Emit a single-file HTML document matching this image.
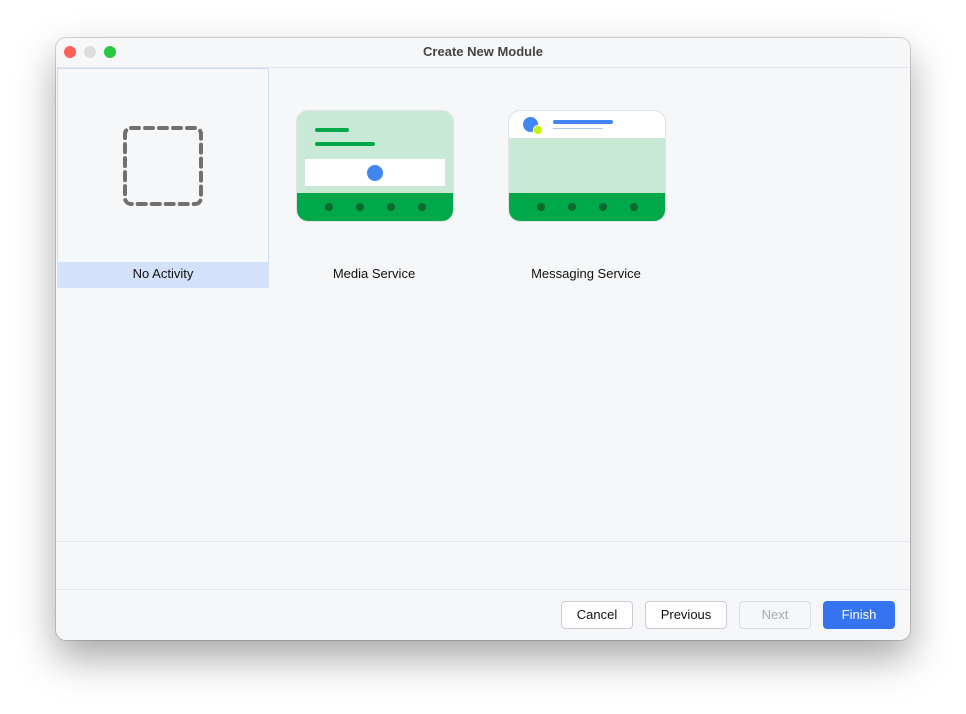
<!DOCTYPE html>
<html><head><style>
body{margin:0;width:966px;height:714px;background:#fff;font-family:"Liberation Sans",sans-serif;position:relative;overflow:hidden}
.win{position:absolute;left:56px;top:38px;width:854px;height:602px;background:#f6f7f9;border-radius:10px;box-shadow:0 18px 40px rgba(0,0,0,.35),0 0 0 1px rgba(0,0,0,.15);overflow:hidden}
.dot{position:absolute;top:8px;width:12px;height:12px;border-radius:50%}
.title{position:absolute;top:0;left:0;right:0;height:29px;line-height:27px;text-align:center;font-size:13px;font-weight:bold;color:#444}
.content{position:absolute;left:0;top:29px;width:854px;height:473px;border-top:1px solid #e4e6ea;border-bottom:1px solid #e4e6ea}
.sel{position:absolute;left:1px;top:0px;width:210px;height:218px;border:1px solid #cfdcf5}
.lbl{position:absolute;font-size:13px;color:#111;text-align:center;width:212px;height:26px;line-height:24px}
.btn{position:absolute;top:563px;height:28px;box-sizing:border-box;border:1px solid #c9ccd2;border-radius:4px;background:#fff;font-size:13px;text-align:center;line-height:26px;color:#111}
.card{position:absolute;width:156px;height:110px;border:1px solid #dfe2e6;border-radius:12px;overflow:hidden;background:#c8e9d6}
.bar{position:absolute;left:0;right:0;bottom:0;height:28px;background:#00a84a}
.bd{position:absolute;top:10px;width:8px;height:8px;border-radius:50%;background:#0d6a2e}
</style></head><body>
<div class="win">
<div class="dot" style="left:8px;background:#fe5f57"></div>
<div class="dot" style="left:28px;background:#dcdcdc"></div>
<div class="dot" style="left:48px;background:#28c840"></div>
<div class="title">Create New Module</div>
<div class="content">
 <div class="sel"></div>
 <svg style="position:absolute;left:65px;top:56px" width="84" height="84" viewBox="0 0 84 84"><rect x="4" y="4" width="76" height="76" rx="6" fill="none" stroke="#707070" stroke-width="4" stroke-linecap="round" stroke-dasharray="8 6"/></svg>
 <div class="lbl" style="left:1px;top:194px;background:#d3e1fb">No Activity</div>
 <div class="card" style="left:240px;top:42px">
  <div style="position:absolute;left:18px;top:17px;width:34px;height:4px;border-radius:2px;background:#00a84a"></div>
  <div style="position:absolute;left:18px;top:31px;width:60px;height:4px;border-radius:2px;background:#00a84a"></div>
  <div style="position:absolute;left:8px;top:48px;width:140px;height:27px;background:#fff"></div>
  <div style="position:absolute;left:70px;top:54px;width:16px;height:16px;border-radius:50%;background:#4286f4"></div>
  <div class="bar"><div class="bd" style="left:28px"></div><div class="bd" style="left:59px"></div><div class="bd" style="left:90px"></div><div class="bd" style="left:121px"></div></div>
 </div>
 <div class="lbl" style="left:212px;top:194px">Media Service</div>
 <div class="card" style="left:452px;top:42px">
  <div style="position:absolute;left:0;right:0;top:0;height:27px;background:#fff"></div>
  <div style="position:absolute;left:14px;top:6px;width:15px;height:15px;border-radius:50%;background:#4286f4"></div>
  <div style="position:absolute;left:24px;top:14px;width:8px;height:8px;border-radius:50%;background:#c6f400;border:1px solid #fff"></div>
  <div style="position:absolute;left:44px;top:9px;width:60px;height:4px;border-radius:2px;background:#4286f4"></div>
  <div style="position:absolute;left:44px;top:17px;width:50px;height:1px;background:#a9c7f7"></div>
  <div class="bar"><div class="bd" style="left:28px"></div><div class="bd" style="left:59px"></div><div class="bd" style="left:90px"></div><div class="bd" style="left:121px"></div></div>
 </div>
 <div class="lbl" style="left:424px;top:194px">Messaging Service</div>
</div>
<div style="position:absolute;left:0;right:0;top:551px;height:1px;background:#e4e6ea"></div>
<div class="btn" style="left:505px;width:72px">Cancel</div>
<div class="btn" style="left:589px;width:82px">Previous</div>
<div class="btn" style="left:683px;width:72px;color:#a6a9b0;background:#f6f7f9;border-color:#dcdee2">Next</div>
<div class="btn" style="left:767px;width:72px;background:#3574f0;border-color:#3574f0;color:#fff">Finish</div>
</div>
</body></html>
